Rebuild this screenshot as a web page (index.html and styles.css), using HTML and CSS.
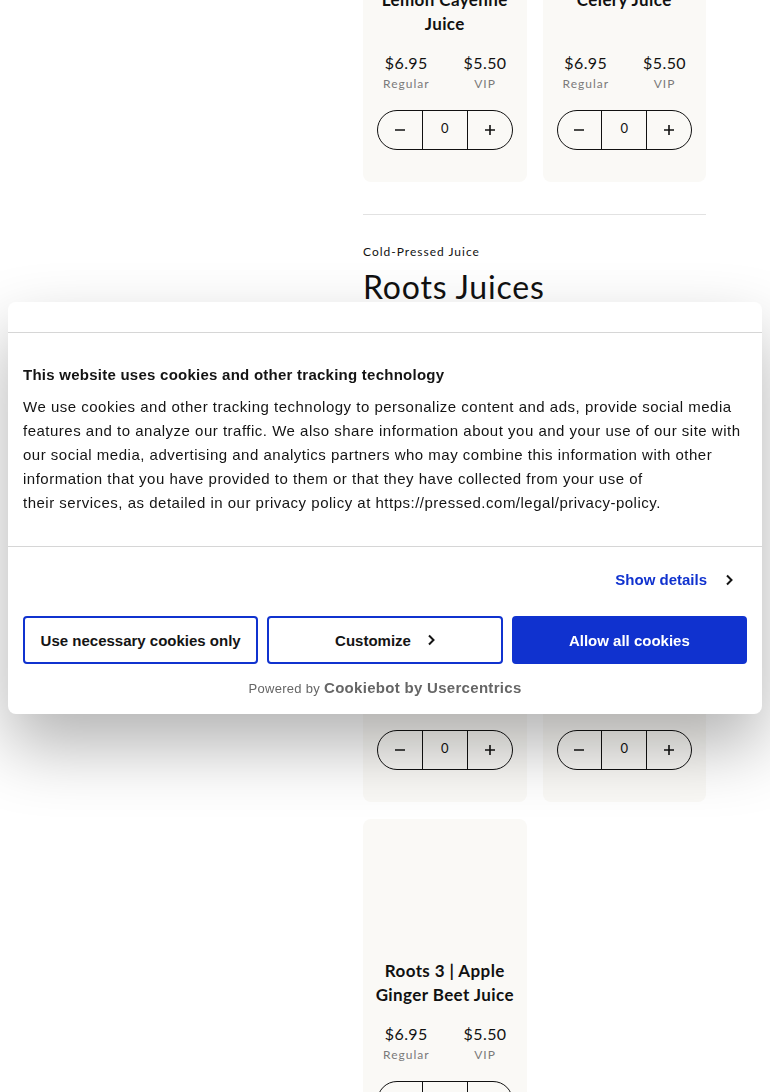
FILE: index.html
```html
<!DOCTYPE html>
<html lang="en">
<head>
    <meta charset="UTF-8">
    <meta name="viewport" content="width=device-width, initial-scale=1.0">
    <title>Pressed - Cold-Pressed Juice</title>
    <link rel="stylesheet" href="styles.css">
</head>
<body>

    <div class="page">
        <aside class="sidebar"></aside>

        <main class="catalog">
            <!-- previous collection, scrolled past -->
            <section class="collection first">
                <div class="product-grid">
                    <div class="product">
                        <div class="product-image"></div>
                        <h3>Lemon Cayenne Juice</h3>
                        <div class="prices">
                            <div class="price"><span class="amount">$6.95</span><span class="label">Regular</span></div>
                            <div class="price"><span class="amount">$5.50</span><span class="label">VIP</span></div>
                        </div>
                        <div class="qty">
                            <button class="qty-btn" aria-label="Remove one"><svg width="12" height="12" viewBox="0 0 12 12"><path d="M1 6h10"/></svg></button>
                            <span class="qty-value">0</span>
                            <button class="qty-btn" aria-label="Add one"><svg width="12" height="12" viewBox="0 0 12 12"><path d="M1 6h10M6 1v10"/></svg></button>
                        </div>
                    </div>
                    <div class="product">
                        <div class="product-image"></div>
                        <h3>Celery Juice</h3>
                        <div class="prices">
                            <div class="price"><span class="amount">$6.95</span><span class="label">Regular</span></div>
                            <div class="price"><span class="amount">$5.50</span><span class="label">VIP</span></div>
                        </div>
                        <div class="qty">
                            <button class="qty-btn" aria-label="Remove one"><svg width="12" height="12" viewBox="0 0 12 12"><path d="M1 6h10"/></svg></button>
                            <span class="qty-value">0</span>
                            <button class="qty-btn" aria-label="Add one"><svg width="12" height="12" viewBox="0 0 12 12"><path d="M1 6h10M6 1v10"/></svg></button>
                        </div>
                    </div>
                </div>
            </section>

            <section class="collection">
                <p class="eyebrow">Cold-Pressed Juice</p>
                <h2>Roots Juices</h2>
                <p class="desc">Earthy blends of beet, carrot and ginger.</p>

                <div class="product-grid">
                    <div class="product">
                        <div class="product-image"></div>
                        <h3>Roots 1 | Carrot Ginger Juice</h3>
                        <div class="prices">
                            <div class="price"><span class="amount">$6.95</span><span class="label">Regular</span></div>
                            <div class="price"><span class="amount">$5.50</span><span class="label">VIP</span></div>
                        </div>
                        <div class="qty">
                            <button class="qty-btn" aria-label="Remove one"><svg width="12" height="12" viewBox="0 0 12 12"><path d="M1 6h10"/></svg></button>
                            <span class="qty-value">0</span>
                            <button class="qty-btn" aria-label="Add one"><svg width="12" height="12" viewBox="0 0 12 12"><path d="M1 6h10M6 1v10"/></svg></button>
                        </div>
                    </div>
                    <div class="product">
                        <div class="product-image"></div>
                        <h3>Roots 2 | Beet Carrot Juice</h3>
                        <div class="prices">
                            <div class="price"><span class="amount">$6.95</span><span class="label">Regular</span></div>
                            <div class="price"><span class="amount">$5.50</span><span class="label">VIP</span></div>
                        </div>
                        <div class="qty">
                            <button class="qty-btn" aria-label="Remove one"><svg width="12" height="12" viewBox="0 0 12 12"><path d="M1 6h10"/></svg></button>
                            <span class="qty-value">0</span>
                            <button class="qty-btn" aria-label="Add one"><svg width="12" height="12" viewBox="0 0 12 12"><path d="M1 6h10M6 1v10"/></svg></button>
                        </div>
                    </div>
                    <div class="product">
                        <div class="product-image"></div>
                        <h3>Roots 3 | Apple Ginger Beet Juice</h3>
                        <div class="prices">
                            <div class="price"><span class="amount">$6.95</span><span class="label">Regular</span></div>
                            <div class="price"><span class="amount">$5.50</span><span class="label">VIP</span></div>
                        </div>
                        <div class="qty">
                            <button class="qty-btn" aria-label="Remove one"><svg width="12" height="12" viewBox="0 0 12 12"><path d="M1 6h10"/></svg></button>
                            <span class="qty-value">0</span>
                            <button class="qty-btn" aria-label="Add one"><svg width="12" height="12" viewBox="0 0 12 12"><path d="M1 6h10M6 1v10"/></svg></button>
                        </div>
                    </div>
                </div>
            </section>
        </main>
    </div>

    <!-- Cookie consent banner -->
    <div class="cookie-dialog" role="dialog">
        <div class="cookie-header"></div>
        <div class="cookie-body">
            <h2>This website uses cookies and other tracking technology</h2>
            <p>We use cookies and other tracking technology to personalize content and ads, provide social media features and to analyze our traffic. We also share information about you and your use of our site with our social media, advertising and analytics partners who may combine this information with other information that you have provided to them or that they have collected from your use of<br>their services, as detailed in our privacy policy at https://pressed.com/legal/privacy-policy.</p>
        </div>
        <div class="cookie-footer">
            <div class="details-row">
                <a href="#" class="details-link">Show details
                    <svg width="8" height="12" viewBox="0 0 8 12"><path d="M2 1.5l4.5 4.5L2 10.5"/></svg>
                </a>
            </div>
            <div class="cookie-buttons">
                <button class="cookie-btn">Use necessary cookies only</button>
                <button class="cookie-btn">Customize
                    <svg width="8" height="12" viewBox="0 0 8 12"><path d="M2 1.5l4.5 4.5L2 10.5"/></svg>
                </button>
                <button class="cookie-btn primary">Allow all cookies</button>
            </div>
            <p class="powered">Powered by <strong>Cookiebot by Usercentrics</strong></p>
        </div>
    </div>

</body>
</html>
```

FILE: styles.css
```css
/* Global Styles */
body {
    margin: 0;
    padding: 0;
    background-color: #fff;
    color: #111;
    font-family: Lato, "Noto Sans", sans-serif;
}

.page {
    display: grid;
    grid-template-columns: 363px 343px;
}

/* Catalog */
.collection {
    padding-top: 29px;
}

.collection.first {
    margin-top: -152px;
    padding-top: 0;
    padding-bottom: 32px;
    border-bottom: 1px solid #e2e2e2;
}

.eyebrow {
    margin: 0;
    font-size: 12px;
    line-height: 16px;
    letter-spacing: 1px;
}

.collection h2 {
    margin: 7px 0 0;
    font-size: 32px;
    line-height: 40px;
    font-weight: 400;
    letter-spacing: 0.8px;
}

.desc {
    margin: 16px 0 0;
    font-size: 14px;
    line-height: 24px;
}

.collection .product-grid {
    margin-top: 121px;
}

.collection.first .product-grid {
    margin-top: 0;
}

.product-grid {
    display: grid;
    grid-template-columns: 1fr 1fr;
    column-gap: 16px;
    row-gap: 17px;
}

.product {
    background-color: #faf9f6;
    border-radius: 8px;
    padding: 16px 14px 32px;
    text-align: center;
}

.product-image {
    height: 112px;
}

.product h3 {
    margin: 12px -6px 0;
    font-size: 17px;
    line-height: 24px;
    font-weight: 700;
    letter-spacing: 0.4px;
    min-height: 48px;
}

.prices {
    display: flex;
    justify-content: space-between;
    margin-top: 17px;
    padding: 0 6px;
}

.price {
    display: flex;
    flex-direction: column;
    align-items: center;
}

.amount {
    font-size: 16px;
    line-height: 20px;
    letter-spacing: 0.4px;
}

.label {
    margin-top: 3px;
    font-size: 12px;
    line-height: 16px;
    color: #7a7a7a;
    letter-spacing: 1px;
}

/* Quantity */
.qty {
    display: flex;
    height: 40px;
    margin-top: 18px;
    border: 1px solid #111;
    border-radius: 20px;
    box-sizing: border-box;
    overflow: hidden;
}

.qty-btn {
    flex: 1;
    border: none;
    background: none;
    padding: 0;
    display: flex;
    align-items: center;
    justify-content: center;
}

.qty-btn svg {
    stroke: #111;
    stroke-width: 1.6;
    fill: none;
}

.qty-value {
    flex: 1;
    border-left: 1px solid #111;
    border-right: 1px solid #111;
    font-size: 13px;
    line-height: 34px;
    font-variant-numeric: lining-nums;
}

/* Cookie Dialog */
.cookie-dialog {
    position: fixed;
    top: 302px;
    left: 8px;
    right: 8px;
    background-color: #fff;
    border-radius: 8px;
    box-shadow: 0 32px 68px rgba(0, 0, 0, 0.3);
    font-family: "Liberation Sans", Arial, sans-serif;
    color: #141414;
}

.cookie-header {
    height: 30px;
    border-bottom: 1px solid #d6d6d6;
}

.cookie-body {
    padding: 30px 15px 31px;
    border-bottom: 1px solid #d6d6d6;
}

.cookie-body h2 {
    margin: 0;
    font-size: 15px;
    line-height: 24px;
    font-weight: 700;
    letter-spacing: 0.25px;
}

.cookie-body p {
    margin: 8px 0 0;
    font-size: 15px;
    line-height: 24px;
    letter-spacing: 0.5px;
}

.cookie-footer {
    padding: 21px 15px 13px;
}

.details-row {
    display: flex;
    justify-content: flex-end;
    padding-right: 14px;
}

.details-link {
    display: flex;
    align-items: center;
    gap: 18px;
    color: #1032cf;
    font-weight: 700;
    font-size: 15px;
    line-height: 24px;
    text-decoration: none;
}

.details-link svg,
.cookie-btn svg {
    stroke: #141414;
    stroke-width: 2;
    fill: none;
}

.cookie-buttons {
    display: flex;
    gap: 9px;
    margin-top: 24px;
}

.cookie-btn {
    flex: 1;
    height: 48px;
    border: 2px solid #1032cf;
    border-radius: 4px;
    background-color: #fff;
    color: #141414;
    font-family: inherit;
    font-size: 15px;
    font-weight: 700;
    display: flex;
    align-items: center;
    justify-content: center;
    gap: 16px;
}

.cookie-btn.primary {
    background-color: #1032cf;
    color: #fff;
}

.powered {
    margin: 12px 0 0;
    text-align: center;
    font-size: 13px;
    line-height: 24px;
    color: #666;
    letter-spacing: 0.3px;
}

.powered strong {
    font-size: 15px;
    color: #666;
}
```
